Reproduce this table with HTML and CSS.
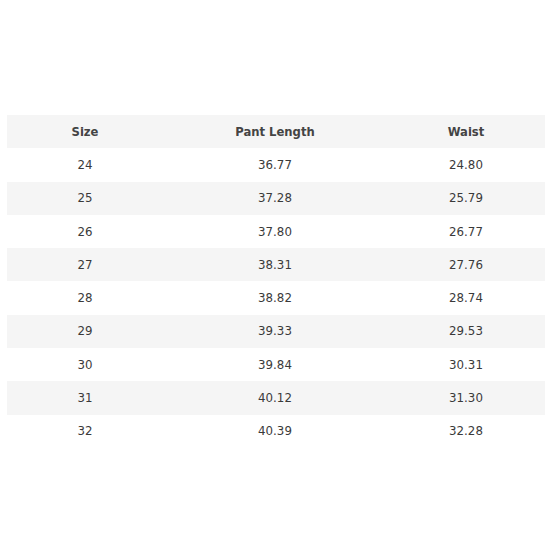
FILE: index.html
```html
<!DOCTYPE html>
<html>
<head>
<meta charset="utf-8">
<link rel="stylesheet" href="styles.css">
</head>
<body>
<div class="page">
  <table class="size-table">
    <colgroup>
      <col class="c1"><col class="c2"><col class="c3">
    </colgroup>
    <thead>
      <tr class="shade"><th>Size</th><th>Pant Length</th><th>Waist</th></tr>
    </thead>
    <tbody>
      <tr><td>24</td><td>36.77</td><td>24.80</td></tr>
      <tr class="shade"><td>25</td><td>37.28</td><td>25.79</td></tr>
      <tr><td>26</td><td>37.80</td><td>26.77</td></tr>
      <tr class="shade"><td>27</td><td>38.31</td><td>27.76</td></tr>
      <tr><td>28</td><td>38.82</td><td>28.74</td></tr>
      <tr class="shade"><td>29</td><td>39.33</td><td>29.53</td></tr>
      <tr><td>30</td><td>39.84</td><td>30.31</td></tr>
      <tr class="shade"><td>31</td><td>40.12</td><td>31.30</td></tr>
      <tr><td>32</td><td>40.39</td><td>32.28</td></tr>
    </tbody>
  </table>
</div>
</body>
</html>
```

FILE: styles.css
```css
html, body {
  margin: 0;
  padding: 0;
  background: #ffffff;
}
.page {
  padding: 115px 9px 0 7px;
  font-family: "DejaVu Sans", Verdana, sans-serif;
}
.size-table {
  width: 538px;
  border-collapse: collapse;
  table-layout: fixed;
}
.c1 { width: 156px; }
.c2 { width: 224px; }
.c3 { width: 158px; }
.size-table th,
.size-table td {
  height: 33.3px;
  padding: 0;
  text-align: center;
  vertical-align: middle;
  font-size: 12px;
}
.size-table th {
  font-weight: bold;
  color: #444;
  font-size: 11.6px;
}
.size-table td {
  color: #3a3a3a;
  font-size: 11.8px;
}
.shade {
  background: #f5f5f5;
}
```
